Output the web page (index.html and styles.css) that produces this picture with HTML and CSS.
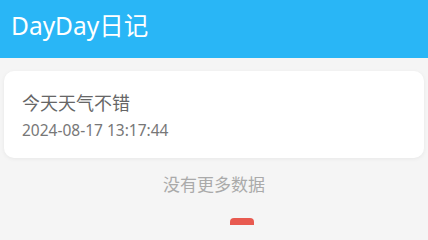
FILE: index.html
```html
<!DOCTYPE html>
<html lang="zh">
<head>
<meta charset="utf-8">
<link rel="stylesheet" href="styles.css">
</head>
<body>
<header class="appbar"><h1 class="title">DayDay日记</h1></header>
<main class="list">
  <div class="card">
    <div class="card-title">今天天气不错</div>
    <div class="card-date">2024-08-17 13:17:44</div>
  </div>
  <div class="nomore">没有更多数据</div>
  <div class="fab-wrap"><div class="fab"></div></div>
</main>
</body>
</html>
```
FILE: styles.css
```css
html, body { margin: 0; padding: 0; overflow: hidden; }
body {
  width: 428px; height: 225px;
  background: #f5f5f5;
  font-family: "Noto Sans", "Noto Sans CJK SC", sans-serif;
}
.appbar {
  height: 58px; background: #29b6f6;
  display: flex; align-items: center;
  padding-left: 11px;
}
.title {
  margin: 0; color: #fff; font-weight: 400;
  font-size: 24.5px; line-height: 1; position: relative; top: -3px;
}
.list { padding: 13px 4px 0; display: flex; flex-direction: column; height: 154px; overflow: hidden; }
.card {
  background: #fff; border-radius: 10px;
  box-shadow: 0 1px 4px rgba(0,0,0,0.06);
  height: 87px; box-sizing: border-box; flex: none;
  padding: 20px 18px 0;
}
.card-title { font-size: 18px; color: #666; line-height: 24px; }
.card-date { font-size: 15.5px; color: #777; line-height: 20px; margin-top: 5px; }
.nomore {
  text-align: center; font-size: 17px; color: #aaa;
  margin-top: 16px; line-height: 22px;
}
.fab-wrap { display: flex; justify-content: center; margin-top: 22px; padding-left: 56px; flex: none; }
.fab { width: 24px; height: 30px; background: #e85a50; border-radius: 4px; }
```
